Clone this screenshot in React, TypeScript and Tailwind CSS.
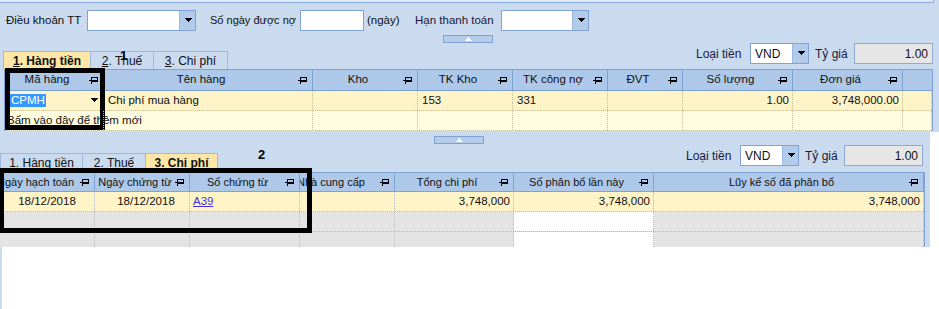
import React from "react";

const Pin = () => (
  <svg width="10" height="8" viewBox="0 0 10 8" className="shrink-0" shapeRendering="crispEdges">
    <path d="M0 4.5H3M2.5 0.5V7.5M2.5 1.5H8.5V5.5H2.5M2.5 4.5H8.5" stroke="#000" strokeWidth="1" fill="none" />
  </svg>
);

const Down = () => (
  <svg width="8" height="5" viewBox="0 0 8 5" shapeRendering="crispEdges">
    <path d="M0 0H8L4 4Z" fill="#000" />
  </svg>
);

const Up = () => (
  <svg width="7" height="4" viewBox="0 0 7 4">
    <path d="M0 4H7L3.5 0Z" fill="#fff" />
  </svg>
);

const Combo = ({ w, text }: { w: string; text?: string }) => (
  <div className={`${w} h-[21px] bg-white border border-[#7fa2d0] flex`}>
    <div className="flex-1 pl-[4px] flex items-center text-[12px]">{text}</div>
    <div className="w-[16px] bg-[#b3cbea] border-l border-[#9db8de] flex items-center justify-center">
      <Down />
    </div>
  </div>
);

const Tab = ({ n, label, active, w }: { n: string; label: string; active?: boolean; w: string }) => (
  <div
    className={`${w} h-full flex items-center justify-center border border-b-0 border-[#9fb9de] -ml-px first:ml-0 whitespace-nowrap ${
      active ? "bg-[#fde6a6] font-bold" : "bg-[#cadbf0]"
    }`}
  >
    <span>
      <span className="underline">{n}</span>. {label}
    </span>
  </div>
);

const Currency = ({ mr }: { mr: string }) => (
  <div className={`ml-auto ${mr} flex items-center h-[21px] text-[12px] whitespace-nowrap`}>
    <span className="w-[54px] text-[#1d1836]">Loại tiền</span>
    <Combo w="w-[59px]" text="VND" />
    <span className="ml-[6px] w-[39px] text-[#1d1836]">Tỷ giá</span>
    <div className="w-[79px] h-[21px] bg-[#e6e6e6] border border-[#8eaad4] flex items-center justify-end pr-[4px]">1.00</div>
  </div>
);

const H = ({ w, label, clipLeft }: { w: string; label: string; clipLeft?: boolean }) => (
  <div className={`${w} shrink-0 h-full flex items-center border-r border-[#7ea3d3] pr-[4px] overflow-hidden`}>
    <div className={`flex-1 whitespace-nowrap ${clipLeft ? "-ml-[3px] text-left" : "text-center"}`}>{label}</div>
    <Pin />
  </div>
);

const C = ({ w, children, right, cls }: { w: string; children?: React.ReactNode; right?: boolean; cls?: string }) => (
  <div
    className={`${w} shrink-0 h-full flex items-center border-r border-dotted border-[#b9b9b9] whitespace-nowrap ${
      right ? "justify-end pr-[3px]" : "pl-[4px]"
    } ${cls ?? ""}`}
  >
    {children}
  </div>
);

export default function App() {
  return (
    <div className="relative w-[939px] h-[309px] bg-white overflow-hidden font-['Liberation_Sans','Noto_Sans',sans-serif] text-[11.5px] text-[#111] leading-none">
      {/* Upper panel */}
      <div className="h-[132px] bg-[#cadbf0] flex flex-col">
        <div className="h-[3px] w-[934px] border-b border-r border-[#8daedb] bg-[#dde8f6]" />
        <div className="flex items-center h-[21px] mt-[7px] pl-[6px] text-[11.5px] whitespace-nowrap">
          <span className="w-[81px]">Điều khoản TT</span>
          <Combo w="w-[109px]" />
          <span className="ml-[14px] w-[90px] text-[11px]">Số ngày được nợ</span>
          <div className="w-[64px] h-[21px] bg-white border border-[#7fa2d0]" />
          <span className="ml-[3px] w-[45px]">(ngày)</span>
          <span className="ml-[3px] w-[86px] text-[#1d1836]">Hạn thanh toán</span>
          <Combo w="w-[88px]" />
        </div>
        <div className="mt-[4px] ml-[443px] w-[50px] h-[8px] bg-[#b4cbea] border border-[#7fa2d0] flex items-center justify-center">
          <Up />
        </div>
        <div className="flex items-start h-[26px]">
          <div className="flex h-[18px] mt-[8px] ml-[3px] text-[12px]">
            <Tab n="1" label="Hàng tiền" active w="w-[88px]" />
            <Tab n="2" label="Thuế" w="w-[64px]" />
            <Tab n="3" label="Chi phí" w="w-[75px]" />
          </div>
          <Currency mr="mr-[6px]" />
        </div>
        <div className="flex">
          <div className="ml-[4px] w-[928px] border-t border-l border-[#7ea3d3] flex flex-col">
            <div className="h-[21px] bg-[#adc8e9] border-b border-[#7ea3d3] flex">
              <H w="w-[99px]" label="Mã hàng" />
              <H w="w-[209px]" label="Tên hàng" />
              <H w="w-[105px]" label="Kho" />
              <H w="w-[95px]" label="TK Kho" />
              <H w="w-[95px]" label="TK công nợ" />
              <H w="w-[75px]" label="ĐVT" />
              <H w="w-[110px]" label="Số lượng" />
              <H w="w-[110px]" label="Đơn giá" />
              <div className="flex-1" />
            </div>
            <div className="h-[20px] bg-[#fff3c8] border-b border-dotted border-[#b9b9b9] flex">
              <div className="w-[99px] shrink-0 h-full flex items-center border-r border-dotted border-[#b9b9b9] pl-[5px] pr-[5px]">
                <span className="bg-[#3399ff] text-white px-[1px] py-[1px]">CPMH</span>
                <span className="ml-auto"><Down /></span>
              </div>
              <C w="w-[209px]">Chi phí mua hàng</C>
              <C w="w-[105px]" />
              <C w="w-[95px]">153</C>
              <C w="w-[95px]">331</C>
              <C w="w-[75px]" />
              <C w="w-[110px]" right>1.00</C>
              <C w="w-[110px]" right>3,748,000.00</C>
              <C w="flex-1" />
            </div>
            <div className="h-[20px] bg-[#fffcdf] border-b border-dotted border-[#b9b9b9] flex">
              <C w="w-[99px]" cls="overflow-visible relative z-10 !pl-[2px]">Bấm vào đây để thêm mới</C>
              <C w="w-[209px]" />
              <C w="w-[105px]" />
              <C w="w-[95px]" />
              <C w="w-[95px]" />
              <C w="w-[75px]" />
              <C w="w-[110px]" />
              <C w="w-[110px]" />
              <C w="flex-1" />
            </div>
          </div>
          <div className="w-[7px] border-l border-[#7ea3d3]" />
        </div>
      </div>

      {/* Lower panel */}
      <div className="w-[930px] h-[115px] bg-[#cadbf0] flex flex-col">
        <div className="mt-[4px] ml-[434px] w-[50px] h-[8px] bg-[#b4cbea] border border-[#7fa2d0] flex items-center justify-center">
          <Up />
        </div>
        <div className="flex items-start h-[27px] mt-[1px]">
          <div className="flex h-[19px] mt-[8px] text-[12px]">
            <Tab n="1" label="Hàng tiền" w="w-[83px]" />
            <Tab n="2" label="Thuế" w="w-[64px]" />
            <Tab n="3" label="Chi phí" active w="w-[73px]" />
          </div>
          <Currency mr="mr-[7px]" />
        </div>
        <div className="flex flex-1 min-h-0">
          <div className="w-[925px] border-t border-r border-[#7ea3d3] flex flex-col overflow-hidden">
            <div className="h-[19px] shrink-0 bg-[#adc8e9] border-b border-[#7ea3d3] flex text-[11px]">
              <H w="w-[95px]" label="Ngày hạch toán" clipLeft />
              <H w="w-[95px]" label="Ngày chứng từ" />
              <H w="w-[110px]" label="Số chứng từ" />
              <H w="w-[95px]" label="Nhà cung cấp" clipLeft />
              <H w="w-[119px]" label="Tổng chi phí" />
              <H w="w-[140px]" label="Số phân bổ lần này" />
              <H w="flex-1" label="Lũy kế số đã phân bổ" />
            </div>
            <div className="h-[20px] shrink-0 bg-[#fff3c8] border-b border-dotted border-[#b9b9b9] flex">
              <C w="w-[95px]" cls="justify-center !pl-0">18/12/2018</C>
              <C w="w-[95px]" cls="justify-center !pl-[8px]">18/12/2018</C>
              <C w="w-[110px]" cls="!pl-[3px]">
                <span className="text-[#4a2fd4] underline">A39</span>
              </C>
              <C w="w-[95px]" />
              <C w="w-[119px]" right>3,748,000</C>
              <C w="w-[140px]" right>3,748,000</C>
              <C w="flex-1" right>3,748,000</C>
            </div>
            {[0, 1].map((i) => (
              <div key={i} className="h-[20px] shrink-0 bg-[#e4e4e4] border-b border-dotted border-[#b9b9b9] flex">
                <C w="w-[95px]" />
                <C w="w-[95px]" />
                <C w="w-[110px]" />
                <C w="w-[95px]" />
                <C w="w-[119px]" />
                <C w="w-[140px]" cls="bg-white" />
                <C w="flex-1" />
              </div>
            ))}
          </div>
        </div>
      </div>
      <div className="w-[2px] h-[62px] bg-[#cadbf0]" />

      {/* Annotations */}
      <div className="absolute left-[5px] top-[68px] w-[100px] h-[62px] border-[5px] border-black" />
      <div className="absolute left-[-1px] top-[168px] w-[313px] h-[65px] border-[5px] border-black" />
      <div className="absolute left-[120px] top-[49px] font-bold text-[13px] text-black">1</div>
      <div className="absolute left-[258px] top-[148px] font-bold text-[13px] text-black">2</div>
    </div>
  );
}
